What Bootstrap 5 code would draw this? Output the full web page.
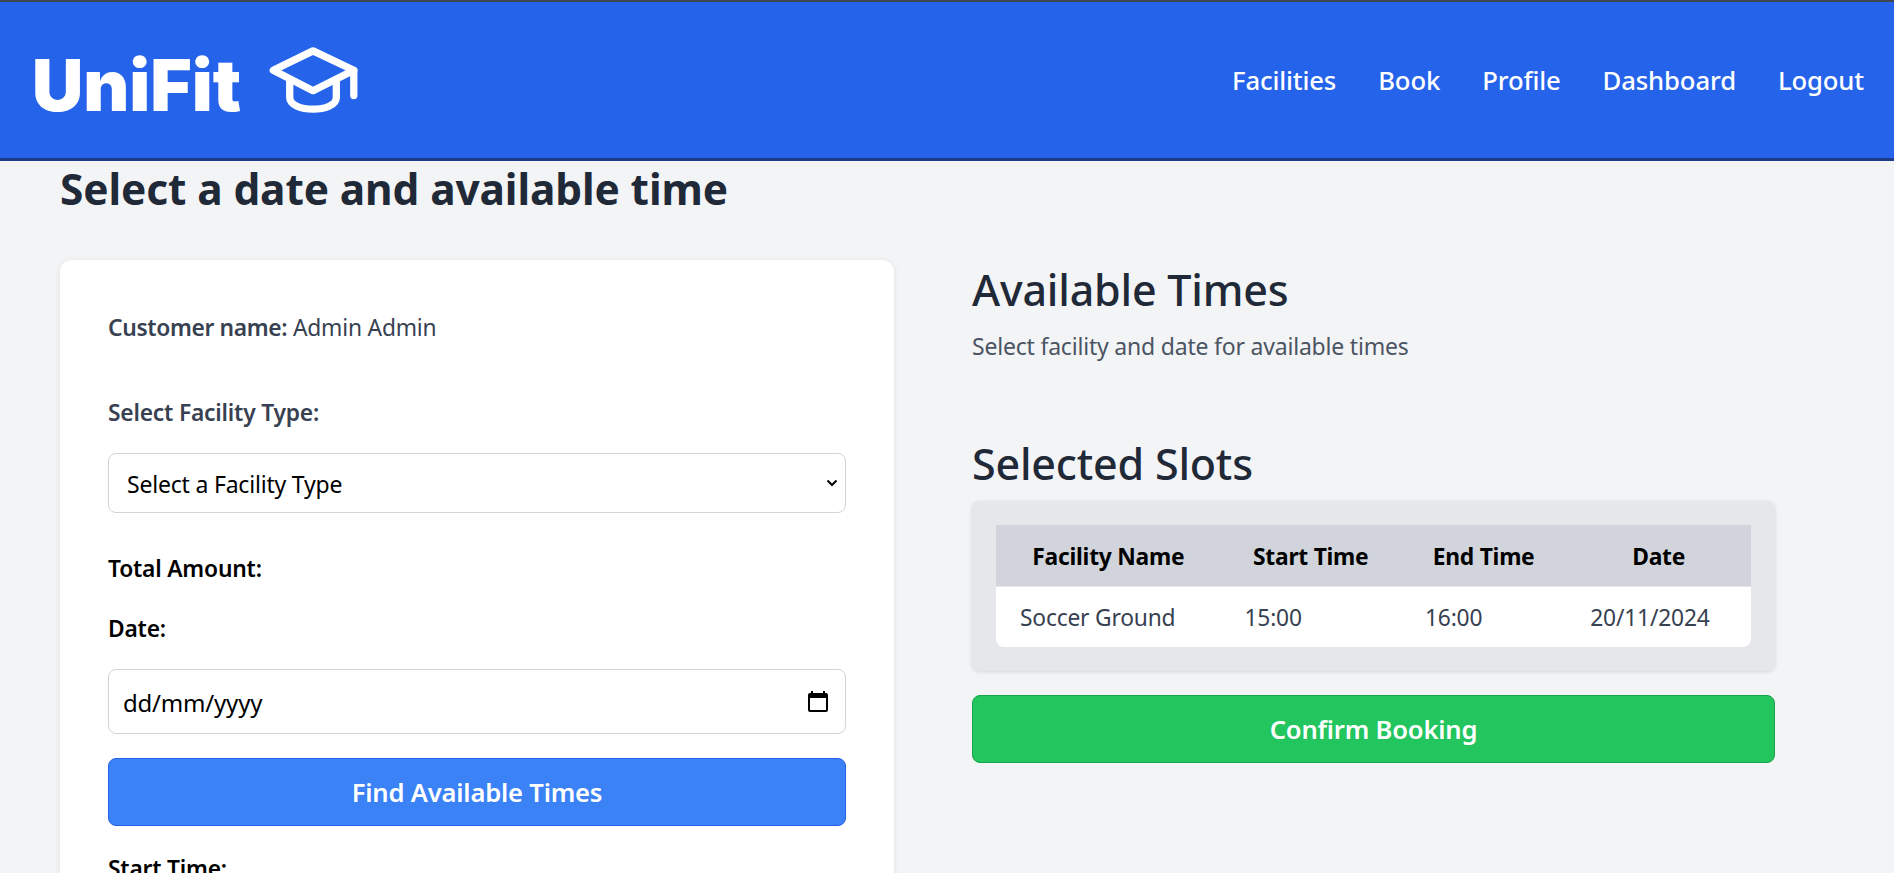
<!DOCTYPE html>
<html lang="en-GB">
<head>
<meta charset="utf-8">
<title>UniFit</title>
<link href="https://cdn.jsdelivr.net/npm/bootstrap@5.3.0/dist/css/bootstrap.min.css" rel="stylesheet">
<style>
body{background:#f3f4f6;font-family:"Noto Sans",sans-serif;color:#1f2937;font-size:19.2px;letter-spacing:-.2px;}
.uf-top{background:#2563eb;border-top:2px solid #3f4650;border-bottom:3px solid #1e3a8a;height:161px;padding:0 30px 0 32px;}
.uf-logo{font-family:"Inter",sans-serif;font-weight:900;font-size:71px;line-height:1;color:#fff;letter-spacing:0;text-decoration:none;}
.uf-logo-text{padding-top:10px;}
.uf-cap{width:90px;height:66px;margin-left:28px;}
.uf-links{gap:42px;padding-top:2px;}
.uf-links a{color:#fff;font-weight:500;font-size:25.7px;text-decoration:none;letter-spacing:-.15px;}
.uf-main{padding:0 60px;}
.uf-title{font-size:42.4px;font-weight:700;line-height:56px;margin:0 0 43px;letter-spacing:-.1px;color:#1f2937;}
.uf-form{width:834px;flex:none;background:#fff;border-radius:12px;padding:48px;box-shadow:0 1px 6px rgba(0,0,0,.08);}
.uf-side{width:803px;flex:none;margin-left:78px;padding-top:2px;}
.uf-name{font-size:22.8px;line-height:38px;color:#374151;margin:1px 0 50px;}
.uf-strong{font-weight:600;letter-spacing:-.35px;}
.uf-lbl{font-size:22.8px;font-weight:600;line-height:32px;color:#374151;margin-bottom:24px;display:block;}
.uf-lbl-dark{color:#000;}
.uf-gap-total{margin-bottom:28px;}
.uf-gap-date{margin-bottom:24px;}
.uf-gap-start{margin-bottom:18px;}
.uf-input{height:60px;border:1px solid #d1d5db;border-radius:8px;font-size:23px;color:#000;padding:2px 18px 0;letter-spacing:-.2px;}
.uf-select{background-image:url("data:image/svg+xml,%3csvg xmlns='http://www.w3.org/2000/svg' viewBox='0 0 12 8'%3e%3cpath fill='none' stroke='%23000' stroke-width='2' d='M1.5 1.5 6 6l4.500-4.500'/%3e%3c/svg%3e");background-size:12px 8px;background-position:right 7px center;margin-bottom:40px;}
.uf-date{height:65px;padding:2px 14px 0;margin-bottom:24px;font-size:24px;background-image:url("data:image/svg+xml,%3csvg xmlns='http://www.w3.org/2000/svg' viewBox='0 0 20 21'%3e%3cpath fill='%23000' d='M3 0h2v2h10V0h2v2h1a2 2 0 0 1 2 2v15a2 2 0 0 1-2 2H2a2 2 0 0 1-2-2V4a2 2 0 0 1 2-2h1zM2 7v12h16V7z'/%3e%3c/svg%3e");background-repeat:no-repeat;background-size:20px 21px;background-position:right 17px center;}
.uf-date::placeholder{color:#000;opacity:1;}
.uf-btn{width:100%;border-radius:8px;font-size:25.6px;font-weight:600;color:#fff;height:68px;letter-spacing:-.2px;padding-top:8px;}
.uf-blue{background:#3b82f6;border:1px solid #2563eb;margin-bottom:27px;}
.uf-green{background:#22c55e;border:1px solid #16a34a;}
.uf-h2{font-size:43px;font-weight:500;line-height:56px;margin:0;color:#1f2937;}
.uf-h2-slots{margin-bottom:9px;}
.uf-sub{font-size:23px;line-height:32px;color:#4b5563;margin:12px 0 74px;}
.uf-panel{background:#e5e7eb;border-radius:8px;padding:24px;box-shadow:0 1px 4px rgba(0,0,0,.12);margin:0 0 24px;}
.uf-table{width:100%;border-collapse:separate;border-spacing:0;}
.uf-table th{background:#d1d5db;color:#000;font-size:22.8px;font-weight:700;height:61px;text-align:center;padding:4px 24px 0;white-space:nowrap;letter-spacing:-.25px;}
.uf-table td{background:#fff;font-size:22.8px;color:#374151;height:61px;padding:2px 24px 0;border-top:1px solid #e5e7eb;white-space:nowrap;}
.uf-table tr:last-child td:first-child{border-bottom-left-radius:8px;}
.uf-table tr:last-child td:last-child{border-bottom-right-radius:8px;}
</style>
</head>
<body>
<nav class="uf-top d-flex align-items-center justify-content-between">
  <a class="uf-logo d-flex align-items-center" href="#"><span class="uf-logo-text">UniFit</span>
    <svg class="uf-cap" viewBox="0 0 92 68" fill="none" stroke="#fff" stroke-width="7.5" stroke-linecap="round" stroke-linejoin="round">
      <path d="M45 4 L87 24 L45 45 L4 24 Z"/>
      <path d="M21 34 V52 C21 60 33 64 45 64 C57 64 69 60 69 52 V34"/>
      <path d="M87 24 V50"/>
    </svg>
  </a>
  <div class="uf-links d-flex">
    <a href="#">Facilities</a><a href="#">Book</a><a href="#">Profile</a><a href="#">Dashboard</a><a href="#">Logout</a>
  </div>
</nav>
<main class="uf-main">
  <h1 class="uf-title">Select a date and available time</h1>
  <div class="d-flex align-items-start">
    <form class="uf-form">
      <p class="uf-name"><span class="uf-strong">Customer name:</span> Admin Admin</p>
      <label class="uf-lbl">Select Facility Type:</label>
      <select class="form-select uf-input uf-select"><option>Select a Facility Type</option></select>
      <label class="uf-lbl uf-lbl-dark uf-gap-total">Total Amount:</label>
      <label class="uf-lbl uf-lbl-dark uf-gap-date">Date:</label>
      <input type="text" placeholder="dd/mm/yyyy" class="form-control uf-input uf-date">
      <button type="button" class="btn uf-btn uf-blue">Find Available Times</button>
      <label class="uf-lbl uf-lbl-dark uf-gap-start">Start Time:</label>
      <select class="form-select uf-input uf-select"><option>Select a Start Time</option></select>
    </form>
    <section class="uf-side">
      <h2 class="uf-h2">Available Times</h2>
      <p class="uf-sub">Select facility and date for available times</p>
      <h2 class="uf-h2 uf-h2-slots">Selected Slots</h2>
      <div class="uf-panel">
        <table class="uf-table">
          <thead><tr><th>Facility Name</th><th>Start Time</th><th>End Time</th><th>Date</th></tr></thead>
          <tbody><tr><td>Soccer Ground</td><td>15:00</td><td>16:00</td><td>20/11/2024</td></tr></tbody>
        </table>
      </div>
      <button type="button" class="btn uf-btn uf-green">Confirm Booking</button>
    </section>
  </div>
</main>
</body>
</html>
